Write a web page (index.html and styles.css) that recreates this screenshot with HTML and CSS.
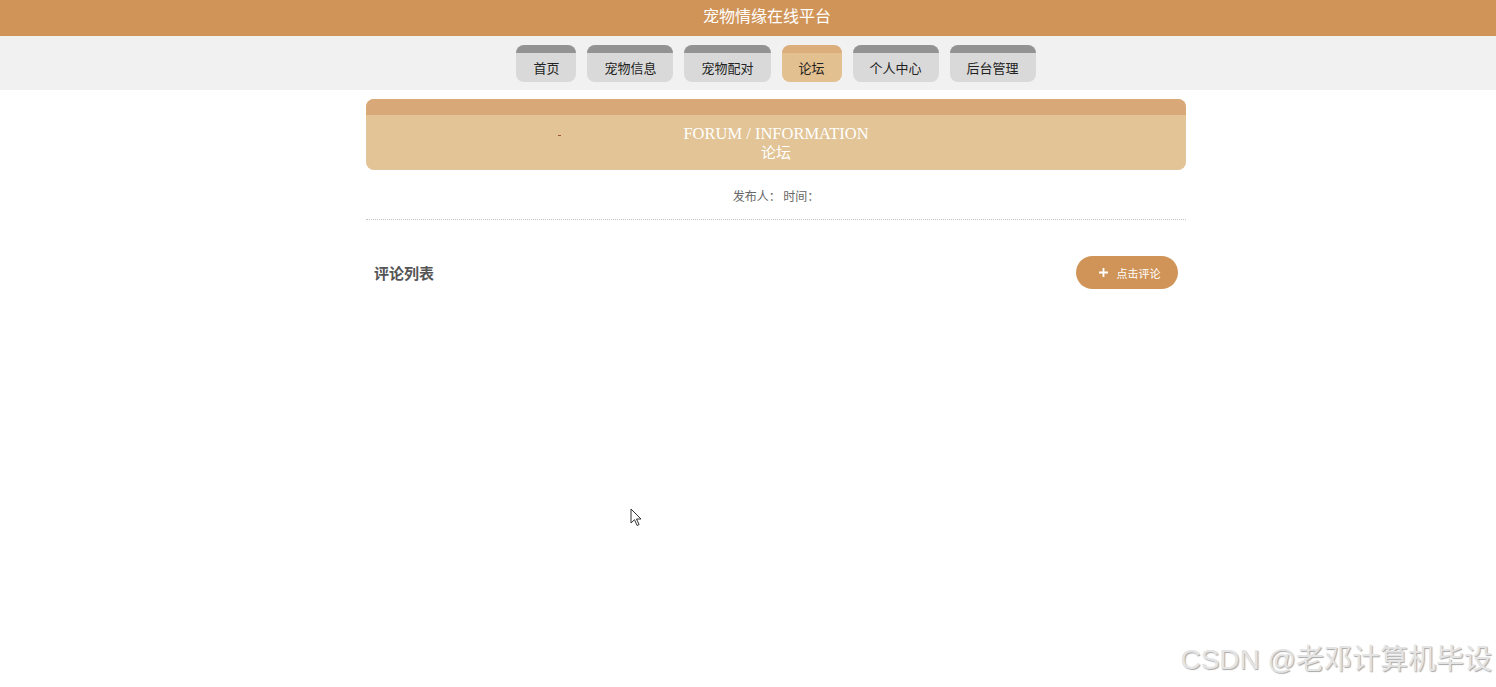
FILE: index.html
```html
<!DOCTYPE html>
<html lang="zh-CN">
<head>
    <meta charset="UTF-8">
    <meta name="viewport" content="width=device-width, initial-scale=1.0">
    <title>宠物情缘在线平台 - 论坛</title>
    <link rel="stylesheet" href="styles.css">
</head>
<body>
    <header class="top-title">
        <span>宠物情缘在线平台</span>
    </header>

    <nav class="menu">
        <a class="tab" href="#">首页</a>
        <a class="tab" href="#">宠物信息</a>
        <a class="tab" href="#">宠物配对</a>
        <a class="tab active" href="#">论坛</a>
        <a class="tab" href="#">个人中心</a>
        <a class="tab" href="#">后台管理</a>
    </nav>

    <main class="page">
        <div class="banner">
            <div class="banner-top"></div>
            <div class="banner-body">
                <span class="banner-dot"></span>
                <div class="banner-en">FORUM / INFORMATION</div>
                <div class="banner-cn">论坛</div>
            </div>
        </div>

        <div class="meta">发布人： 时间：</div>
        <div class="divider"></div>

        <div class="comment-head">
            <h3>评论列表</h3>
            <button type="button" class="btn-comment">
                <svg width="11" height="11" viewBox="0 0 11 11"><path d="M5.5 1v9M1 5.5h9" stroke="#fff" stroke-width="1.8"/></svg>
                <span>点击评论</span>
            </button>
        </div>
    </main>

    <!-- 截图里的鼠标指针和水印 -->
    <svg class="cursor" width="12" height="19" viewBox="0 0 12 19">
        <path d="M1 1v14l3.5-3.3 2.6 5.8 2-.9-2.6-5.6H11z" fill="#fff" stroke="#333" stroke-width="1"/>
    </svg>
    <div class="watermark">CSDN @老邓计算机毕设</div>
</body>
</html>
```

FILE: styles.css
```css
body {
    margin: 0;
    padding: 0;
    font-family: "Microsoft YaHei", "Noto Sans CJK SC", "Liberation Sans", sans-serif;
    background: #fff;
    color: #333;
    height: 687px;
    overflow: hidden;
    position: relative;
}
.top-title {
    height: 36px;
    background-color: #d09458;
    color: #fff;
    font-size: 16px;
    display: flex;
    align-items: center;
    justify-content: center;
    padding-left: 38px;
    padding-bottom: 6px;
    box-sizing: border-box;
}
.menu {
    height: 54px;
    background: #f1f1f1;
    display: flex;
    justify-content: center;
    align-items: flex-start;
    padding-left: 56px;
    box-sizing: border-box;
    padding-top: 9px;
    gap: 11px;
}
.tab {
    display: flex;
    align-items: center;
    height: 37px;
    padding: 0 17px 1px;
    box-sizing: border-box;
    font-size: 13px;
    color: #222;
    text-decoration: none;
    background: #d9d9d9;
    border-top: 8px solid #939393;
    border-radius: 8px;
}
.tab.active {
    background: #e2c08f;
    border-top-color: #dcae7c;
}
.page {
    width: 820px;
    margin: 0 auto;
    position: relative;
    left: 28px;
    padding-top: 9px;
}
.banner {
    border-radius: 8px;
    overflow: hidden;
    background: #e2c496;
}
.banner-top {
    height: 16px;
    background: #d8a878;
}
.banner-body {
    height: 55px;
    position: relative;
    text-align: center;
    color: #fff;
    padding-top: 9px;
    box-sizing: border-box;
}
.banner-dot {
    position: absolute;
    left: 192px;
    top: 20px;
    width: 3px;
    height: 1px;
    background: #a0503a;
}
.banner-en {
    font-family: "Liberation Serif", "Times New Roman", serif;
    font-size: 16.5px;
    line-height: 19px;
}
.banner-cn {
    font-family: "Noto Sans CJK SC", serif;
    font-size: 15px;
    line-height: 19px;
    margin-top: -1px;
}
.meta {
    text-align: center;
    font-size: 12px;
    color: #666;
    margin-top: 17px;
    line-height: 18px;
}
.divider {
    margin-top: 14px;
    border-top: 1px dotted #c4c4c4;
}
.comment-head {
    display: flex;
    justify-content: space-between;
    align-items: center;
    padding: 0 8px;
    margin-top: 36px;
}
.comment-head h3 {
    margin: 0;
    font-size: 15px;
    color: #555;
    font-weight: bold;
}
.btn-comment {
    width: 102px;
    height: 33px;
    border: none;
    border-radius: 17px;
    background: #d09458;
    color: #fff;
    font-size: 11px;
    font-family: inherit;
    display: flex;
    align-items: center;
    justify-content: center;
    gap: 8px;
    padding: 0 0 0 4px;
}
.cursor {
    position: absolute;
    left: 630px;
    top: 508px;
}
.watermark {
    position: absolute;
    right: 4px;
    bottom: 10px;
    font-family: "Liberation Sans", "Noto Sans CJK SC", sans-serif;
    font-size: 28px;
    color: #e4e4e4;
    text-shadow: 1px 1px 1px #a8a8a8;
}
```
